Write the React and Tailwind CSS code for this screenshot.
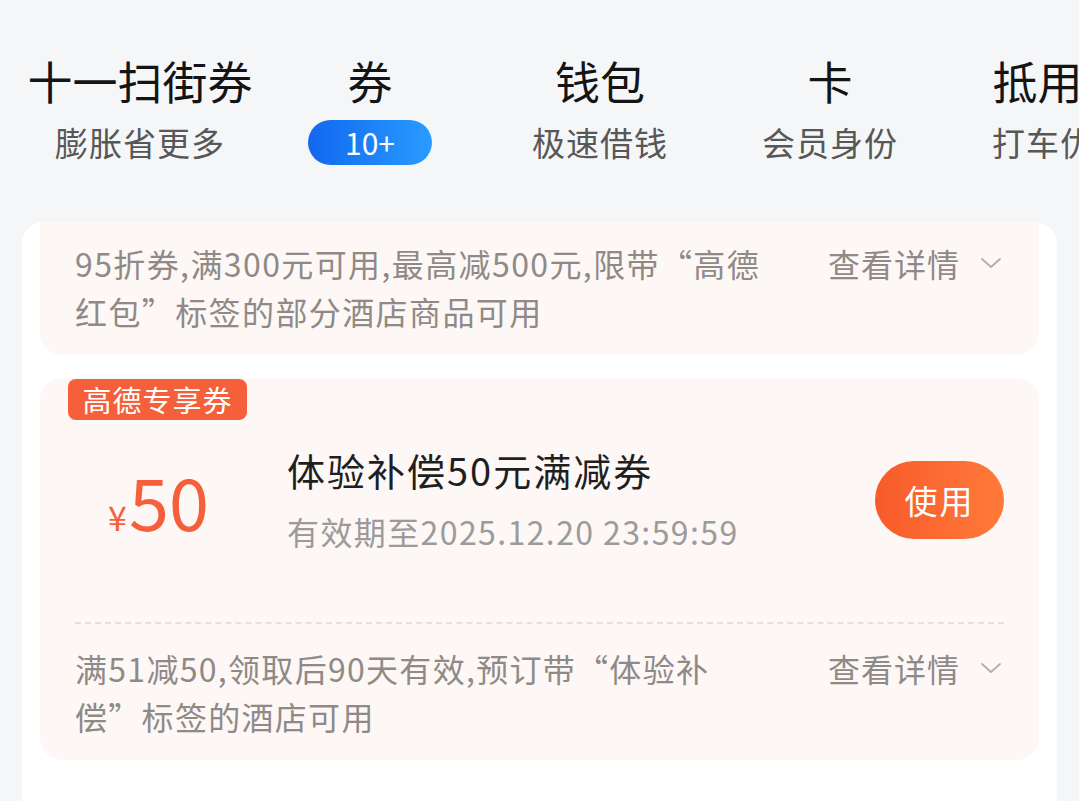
import React from "react";

const FONT = { fontFamily: '"Noto Sans CJK SC", "Noto Sans", sans-serif' };

function Chevron() {
  return (
    <svg width="22" height="12" viewBox="0 0 22 12" fill="none" className="ml-[20px]">
      <path d="M2 2 L11 10 L20 2" stroke="#b3aeab" strokeWidth="1.8" strokeLinecap="round" strokeLinejoin="round" />
    </svg>
  );
}

function Tab({ title, sub, badge }) {
  return (
    <div className="w-[230px] shrink-0 flex flex-col items-center">
      <div className="text-[45px] leading-[60px] font-normal text-[#141414] whitespace-nowrap">{title}</div>
      <div className="mt-[8px] h-[46px] flex items-center">
        {badge ? (
          <div className="w-[124px] h-[45px] rounded-full bg-gradient-to-r from-[#1467f0] to-[#2a9bff] flex items-center justify-center text-white text-[30px] leading-none">
            {badge}
          </div>
        ) : (
          <div className="text-[33px] leading-[46px] text-[#575757] tracking-[1px] whitespace-nowrap">{sub}</div>
        )}
      </div>
    </div>
  );
}

function Details() {
  return (
    <div className="flex items-center h-[48px] text-[32px] text-[#8f8a87] tracking-[1px] whitespace-nowrap">
      查看详情
      <Chevron />
    </div>
  );
}

export default function App() {
  return (
    <div style={FONT} className="w-[1079px] h-[801px] overflow-hidden bg-[#f5f6f8] flex flex-col">
      <div className="flex pl-[25px] pt-[51px] overflow-hidden">
        <Tab title="十一扫街券" sub="膨胀省更多" />
        <Tab title="券" badge="10+" />
        <Tab title="钱包" sub="极速借钱" />
        <Tab title="卡" sub="会员身份" />
        <Tab title="抵用券" sub="打车优惠" />
      </div>

      <div className="mt-[57px] mx-[22px] flex-1 bg-white rounded-t-[22px] overflow-hidden px-[18px]">
        {/* first card (scrolled, top clipped) */}
        <div className="bg-[#fdf8f5] rounded-b-[22px] pl-[35px] pr-[37px] pt-[17px] pb-[20px] flex justify-between">
          <div className="text-[32px] leading-[48px] text-[#8f8a87] tracking-[1.4px]">
            95折券,满300元可用,最高减500元,限带“高德
            <br />
            红包”标签的部分酒店商品可用
          </div>
          <Details />
        </div>

        {/* second card */}
        <div className="mt-[23px] bg-[#fdf8f5] rounded-[22px] pt-[1px] pb-[20px]">
          <div className="ml-[28px] w-[179px] h-[41px] rounded-[8px] bg-[#f5603a] flex items-center justify-center text-white text-[29px] leading-none tracking-[1px]">
            高德专享券
          </div>
          <div className="h-[160px] flex items-center pr-[35px]">
            <div className="w-[247px] pr-[10px] flex items-baseline justify-center text-[#f5603a]">
              <span className="text-[34px] leading-none mr-[2px]">¥</span>
              <span className="text-[72px] leading-none">50</span>
            </div>
            <div className="flex-1 flex flex-col">
              <div className="text-[38px] leading-[50px] text-[#1f1f1f] tracking-[2px]">体验补偿50元满减券</div>
              <div className="mt-[12px] text-[32px] leading-[48px] text-[#9b9b9b] tracking-[1.4px]">有效期至2025.12.20 23:59:59</div>
            </div>
            <div className="w-[129px] h-[78px] rounded-full bg-gradient-to-r from-[#f85a2b] to-[#ff7a3a] flex items-center justify-center text-white text-[33px] tracking-[2px] leading-none">
              使用
            </div>
          </div>
          <div className="mx-[35px] mt-[42px] border-t-2 border-dashed border-[#e4e0de]" />
          <div className="mt-[20px] pl-[35px] pr-[37px] flex justify-between">
            <div className="text-[32px] leading-[48px] text-[#8f8a87] tracking-[1.3px]">
              满51减50,领取后90天有效,预订带“体验补
              <br />
              偿”标签的酒店可用
            </div>
            <Details />
          </div>
        </div>
      </div>
    </div>
  );
}
